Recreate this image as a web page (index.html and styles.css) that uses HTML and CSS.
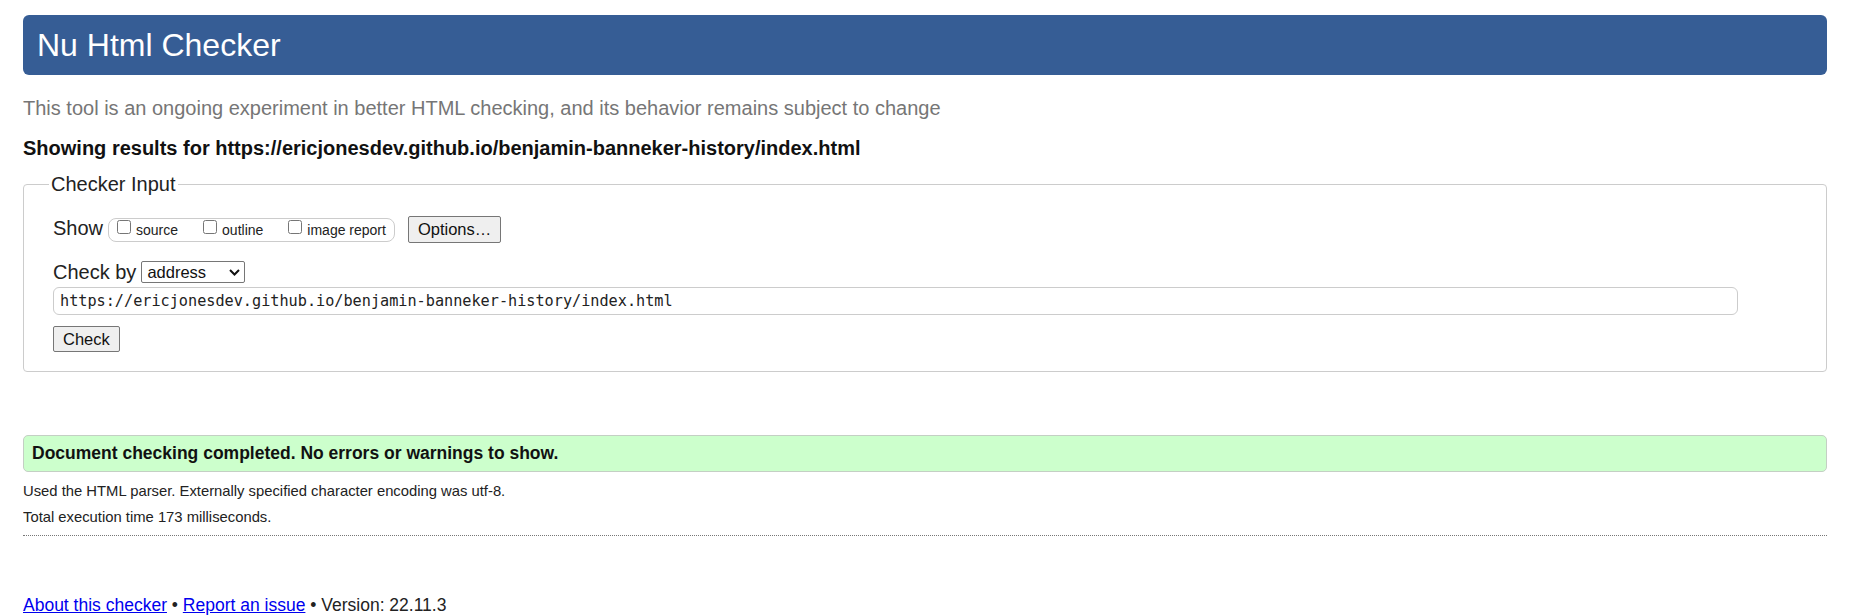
FILE: index.html
```html
<!DOCTYPE html>
<html lang="en">
<head>
<meta charset="utf-8">
<title>Showing results for https://ericjonesdev.github.io/benjamin-banneker-history/index.html - Nu Html Checker</title>
<link rel="stylesheet" href="styles.css">
</head>
<body>
<h1 class="title">Nu Html Checker</h1>
<p class="lede">This tool is an ongoing experiment in better HTML checking, and its behavior remains subject to change</p>
<p class="showing">Showing results for https://ericjonesdev.github.io/benjamin-banneker-history/index.html</p>
<form class="form">
  <fieldset class="checker">
    <legend class="legend">Checker Input</legend>
    <div class="row show-row">
      <span class="row-label show-label">Show</span>
      <span class="opts">
        <label class="opt"><input type="checkbox" class="cb"><span class="opt-text">source</span></label>
        <label class="opt"><input type="checkbox" class="cb"><span class="opt-text">outline</span></label>
        <label class="opt"><input type="checkbox" class="cb"><span class="opt-text">image report</span></label>
      </span>
      <button type="button" class="btn options-btn">Options…</button>
    </div>
    <div class="row by-row">
      <label class="row-label by-label" for="docselect">Check by</label>
      <span class="select-wrap">
        <select id="docselect" class="select"><option>address</option></select>
        <svg class="chevron" width="11" height="7" viewBox="0 0 11 7" aria-hidden="true"><path d="M1 1 L5.5 5.5 L10 1" fill="none" stroke="#111" stroke-width="2"/></svg>
      </span>
    </div>
    <div class="row url-row">
      <input type="url" class="url" value="https://ericjonesdev.github.io/benjamin-banneker-history/index.html">
    </div>
    <div class="row submit-row">
      <button type="button" class="btn check-btn">Check</button>
    </div>
  </fieldset>
</form>
<div class="success"><p class="success-text">Document checking completed. No errors or warnings to show.</p></div>
<p class="details first">Used the HTML parser. Externally specified character encoding was utf-8.</p>
<p class="details">Total execution time 173 milliseconds.</p>
<hr class="rule">
<p class="footer"><a href="#" class="link">About this checker</a> • <a href="#" class="link">Report an issue</a> • Version: 22.11.3</p>
</body>
</html>
```
FILE: styles.css
```css
* { box-sizing: border-box; }
html { background: #fff; }
body {
  margin: 0 26px 0 23px;
  font-family: "Liberation Sans", Arial, sans-serif;
  color: #222;
}
.title {
  margin: 15px 0 0;
  padding: 12px 14px;
  font-size: 32px;
  line-height: 36px;
  font-weight: normal;
  color: #fff;
  background: #365d95;
  border-radius: 6px;
}
.lede {
  margin: 21px 0 0;
  font-size: 20px;
  line-height: 24px;
  color: #767676;
}
.showing {
  margin: 16px 0 0;
  font-size: 20px;
  line-height: 24px;
  font-weight: bold;
  color: #111;
}
.form { margin: 0; }
.checker {
  margin: 12px 0 0;
  padding: 20px 29px 19px 29px;
  border: 1px solid #ccc;
  border-radius: 4px;
  min-width: 0;
}
.legend {
  margin-left: -4px;
  padding: 0 2px;
  font-size: 20px;
  line-height: 24px;
  color: #222;
}
.row { display: flex; align-items: center; }
.row-label { font-size: 20px; line-height: 24px; color: #222; }
.show-row { height: 27px; }
.show-label { margin: 0 5px 4px 0; }
.opts {
  display: flex;
  align-items: flex-start;
  gap: 25px;
  height: 24px;
  padding: 0 8px;
  border: 1px solid #ccc;
  border-radius: 8px;
}
.opt { display: flex; align-items: flex-start; gap: 5px; }
.cb { margin: 1px 0 0; width: 14px; height: 14px; }
.opt-text { font-size: 14px; line-height: 16px; margin-top: 3.5px; color: #222; }
.btn {
  font-family: "Liberation Sans", Arial, sans-serif;
  font-size: 16.5px;
  color: #111;
  background: #efefef;
  border: 1px solid #767676;
  border-radius: 2px;
  padding: 0 9px;
  margin: 0;
}
.options-btn { margin-left: 13px; height: 27px; }
.by-row { margin-top: 17px; height: 24px; }
.by-label { margin-right: 5px; }
.select-wrap { position: relative; display: inline-block; height: 22px; }
.select {
  appearance: none;
  -webkit-appearance: none;
  display: block;
  width: 104px;
  height: 22px;
  margin: 0;
  padding: 0 0 0 5px;
  font-family: "Liberation Sans", Arial, sans-serif;
  font-size: 16.5px;
  color: #111;
  background: #fff;
  border: 1px solid #767676;
  border-radius: 2px;
}
.chevron { position: absolute; right: 5px; top: 8px; pointer-events: none; }
.url-row { margin-top: 3px; }
.url {
  width: calc(100% - 59px);
  height: 28px;
  margin: 0;
  padding: 0 6px;
  font-family: "DejaVu Sans Mono", "Liberation Mono", monospace;
  font-size: 15.2px;
  color: #222;
  background: #fff;
  border: 1px solid #ccc;
  border-radius: 6px;
}
.submit-row { margin-top: 11px; }
.check-btn { height: 26px; }
.success {
  margin: 63px 0 0;
  padding: 7px 8px;
  background: #ccffcc;
  border: 1px solid #c4cfc4;
  border-radius: 5px;
}
.success-text {
  margin: 0;
  font-size: 17.5px;
  line-height: 21px;
  font-weight: bold;
  color: #111;
}
.details {
  margin: 8px 0 0;
  font-size: 14.8px;
  line-height: 18px;
  color: #222;
}
.details.first { margin-top: 10px; }
.rule {
  margin: 9px 0 0;
  height: 0;
  border: 0;
  border-top: 1px dotted #777;
}
.footer {
  margin: 59px 0 0;
  font-size: 17.5px;
  line-height: 21px;
  color: #222;
}
.link { color: #0000ee; text-decoration: underline; }
```
